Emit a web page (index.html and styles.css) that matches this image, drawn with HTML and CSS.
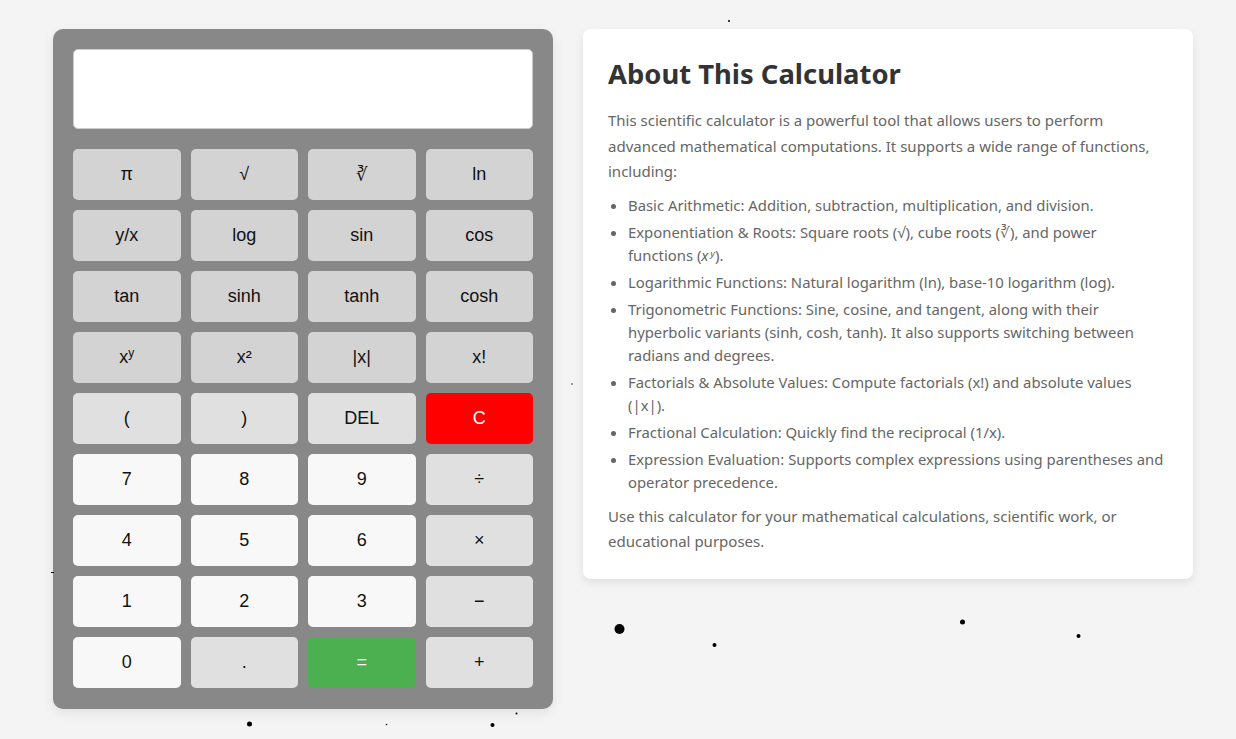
FILE: index.html
```html
<!DOCTYPE html>
<html lang="en">
<head>
<meta charset="utf-8">
<title>Scientific Calculator</title>
<link rel="stylesheet" href="styles.css">
</head>
<body>
<svg class="particles" width="1236" height="739" viewBox="0 0 1236 739" aria-hidden="true">
  <circle cx="729" cy="21" r="1"/>
  <circle cx="572" cy="384" r="0.7"/>
  <rect x="51" y="572" width="3" height="1"/>
  <circle cx="619.5" cy="629" r="5"/>
  <circle cx="714.5" cy="645" r="2"/>
  <circle cx="962.5" cy="622" r="2.5"/>
  <circle cx="1078.5" cy="636" r="2"/>
  <circle cx="249.5" cy="724" r="2.5"/>
  <circle cx="386.5" cy="724.5" r="0.8"/>
  <circle cx="492.5" cy="725" r="2"/>
  <circle cx="516.5" cy="713.5" r="1"/>
</svg>
<main class="layout">
  <section class="calculator">
    <div class="display"></div>
    <div class="keys">
      <button class="key fn">π</button>
      <button class="key fn">√</button>
      <button class="key fn">∛</button>
      <button class="key fn">ln</button>
      <button class="key fn">y/x</button>
      <button class="key fn">log</button>
      <button class="key fn">sin</button>
      <button class="key fn">cos</button>
      <button class="key fn">tan</button>
      <button class="key fn">sinh</button>
      <button class="key fn">tanh</button>
      <button class="key fn">cosh</button>
      <button class="key fn">x<sup>y</sup></button>
      <button class="key fn">x²</button>
      <button class="key fn">|x|</button>
      <button class="key fn">x!</button>
      <button class="key op">(</button>
      <button class="key op">)</button>
      <button class="key op">DEL</button>
      <button class="key clear">C</button>
      <button class="key num">7</button>
      <button class="key num">8</button>
      <button class="key num">9</button>
      <button class="key op">÷</button>
      <button class="key num">4</button>
      <button class="key num">5</button>
      <button class="key num">6</button>
      <button class="key op">×</button>
      <button class="key num">1</button>
      <button class="key num">2</button>
      <button class="key num">3</button>
      <button class="key op">−</button>
      <button class="key num">0</button>
      <button class="key op">.</button>
      <button class="key equals">=</button>
      <button class="key op">+</button>
    </div>
  </section>
  <section class="about">
    <h2>About This Calculator</h2>
    <p>This scientific calculator is a powerful tool that allows users to perform advanced mathematical computations. It supports a wide range of functions, including:</p>
    <ul>
      <li>Basic Arithmetic: Addition, subtraction, multiplication, and division.</li>
      <li>Exponentiation &amp; Roots: Square roots (√), cube roots (∛), and power functions (<i>xʸ</i>).</li>
      <li>Logarithmic Functions: Natural logarithm (ln), base-10 logarithm (log).</li>
      <li>Trigonometric Functions: Sine, cosine, and tangent, along with their hyperbolic variants (sinh, cosh, tanh). It also supports switching between radians and degrees.</li>
      <li>Factorials &amp; Absolute Values: Compute factorials (x!) and absolute values (|x|).</li>
      <li>Fractional Calculation: Quickly find the reciprocal (1/x).</li>
      <li>Expression Evaluation: Supports complex expressions using parentheses and operator precedence.</li>
    </ul>
    <p>Use this calculator for your mathematical calculations, scientific work, or educational purposes.</p>
  </section>
</main>
</body>
</html>
```

FILE: styles.css
```css
html, body {
  margin: 0;
  padding: 0;
}

body {
  background: #f4f4f4;
  font-family: "Liberation Sans", Arial, sans-serif;
  min-height: 739px;
  position: relative;
}

.particles {
  position: absolute;
  left: 0;
  top: 0;
  fill: #000;
  pointer-events: none;
}

.layout {
  display: flex;
  align-items: flex-start;
  gap: 30px;
  padding: 29px 0 0 53px;
}

.calculator {
  width: 460px;
  padding: 20px 20px 21px;
  background: #888888;
  border-radius: 10px;
  box-shadow: 0 4px 12px rgba(0, 0, 0, 0.08);
  display: flex;
  flex-direction: column;
  gap: 20px;
}

.display {
  height: 78px;
  background: #ffffff;
  border: 1px solid #cccccc;
  border-radius: 5px;
}

.keys {
  display: grid;
  grid-template-columns: repeat(4, 1fr);
  grid-auto-rows: 51px;
  gap: 10px;
}

.key {
  border: none;
  border-radius: 5px;
  font-family: "Liberation Sans", Arial, sans-serif;
  font-size: 18px;
  color: #111;
  padding: 0;
  cursor: pointer;
}

.key sup {
  font-size: 12px;
  vertical-align: 6px;
  line-height: 0;
}

.fn { background: #d3d3d3; }
.op { background: #e0e0e0; }
.num { background: #f8f8f8; }
.clear { background: #ff0000; color: #fff; }
.equals { background: #4caf50; color: #fff; }

.about {
  width: 560px;
  padding: 25px 25px 24px;
  background: #ffffff;
  border-radius: 8px;
  box-shadow: 0 4px 10px rgba(0, 0, 0, 0.08);
  font-family: "Noto Sans", "Open Sans", sans-serif;
  color: #666666;
}

.about h2 {
  margin: 0 0 14px;
  font-size: 27.4px;
  line-height: 40px;
  font-weight: 700;
  color: #333333;
}

.about p {
  margin: 0;
  font-size: 15px;
  line-height: 25.5px;
}

.about ul {
  margin: 9px 0 10px;
  padding: 0 2.5px 0 20px;
  font-size: 14.85px;
  line-height: 23px;
}

.about li {
  margin-bottom: 4px;
}

.about li i {
  letter-spacing: 1px;
}
```
